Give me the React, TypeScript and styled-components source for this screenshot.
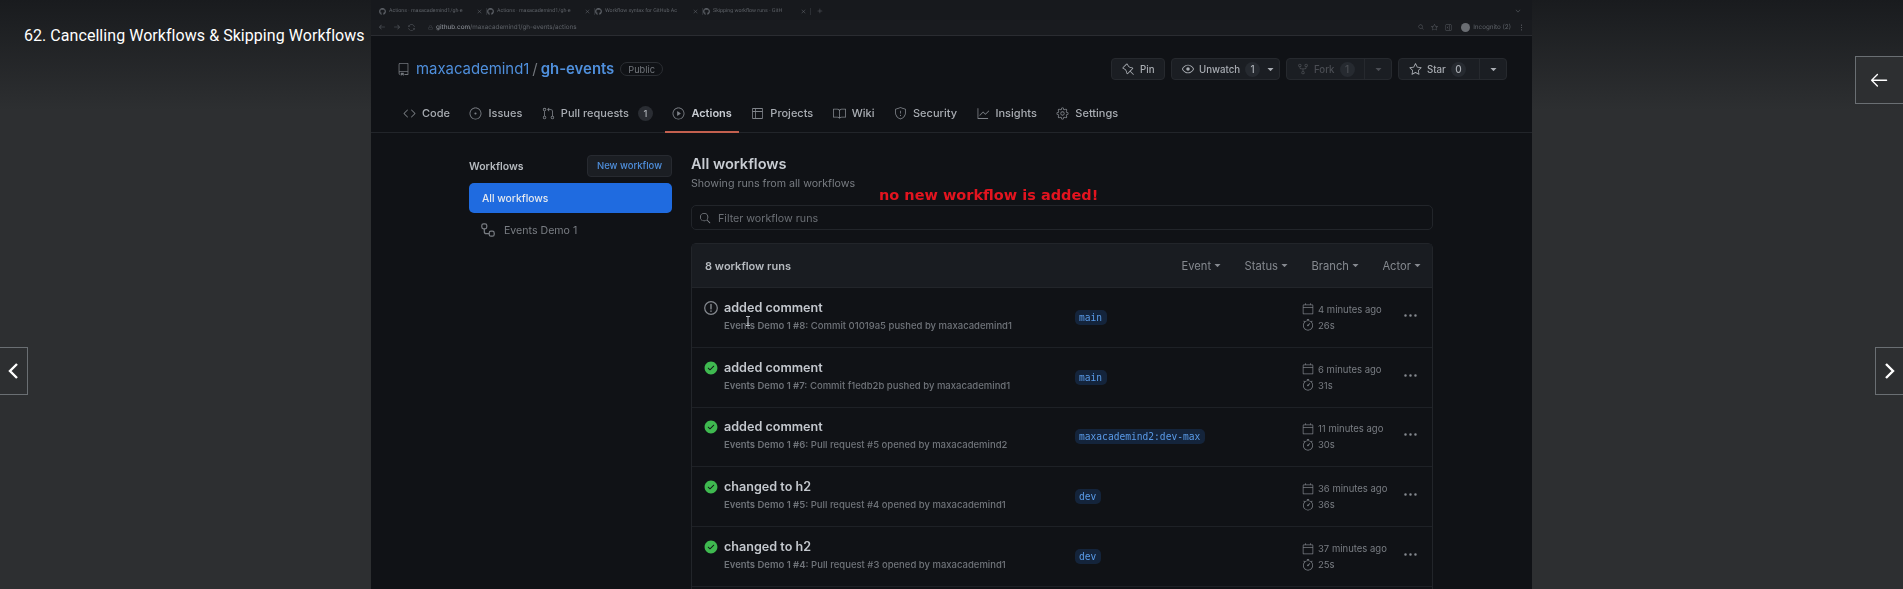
import styled, { createGlobalStyle } from "styled-components";
import { FaGithub } from "react-icons/fa";
import {
  GoArrowLeft,
  GoArrowRight,
  GoBook,
  GoCalendar,
  GoCheckCircleFill,
  GoChevronDown,
  GoCode,
  GoGear,
  GoGitPullRequest,
  GoGraph,
  GoIssueOpened,
  GoKebabHorizontal,
  GoLock,
  GoPin,
  GoPlay,
  GoEye,
  GoRepo,
  GoRepoForked,
  GoSearch,
  GoShield,
  GoStar,
  GoStopwatch,
  GoSync,
  GoTable,
  GoTriangleDown,
  GoX,
  GoPlus,
  GoSidebarExpand,
} from "react-icons/go";

const GlobalStyle = createGlobalStyle`
  html, body {
    margin: 0;
    padding: 0;
    background: #2d2f31;
  }
  * {
    box-sizing: border-box;
  }
`;

const Page = styled.div`
  position: relative;
  height: 100vh;
  overflow: hidden;
  display: flex;
  justify-content: center;
  background: #2d2f31;
  font-family: Inter, "Liberation Sans", sans-serif;
`;

const TopShade = styled.div`
  position: absolute;
  inset: 0 0 auto 0;
  height: 110px;
  background: linear-gradient(to bottom, rgba(24, 26, 29, 0.95), rgba(45, 47, 49, 0));
  pointer-events: none;
`;

const LectureTitle = styled.div`
  position: absolute;
  left: 24px;
  top: 25px;
  font-family: Roboto, sans-serif;
  font-size: 16px;
  letter-spacing: 0.05px;
  line-height: 22px;
  color: #fff;
  white-space: nowrap;
`;

const BackButton = styled.div`
  position: absolute;
  right: -1px;
  top: 56px;
  width: 49px;
  height: 48px;
  border: 1px solid #6a6f73;
  background: #2d2f31;
  color: #fff;
  display: flex;
  align-items: center;
  justify-content: center;
  padding-right: 2px;
`;

const SideArrow = styled.div<{ $side: "left" | "right" }>`
  position: absolute;
  top: 347px;
  ${(p) => p.$side}: -1px;
  width: 29px;
  height: 48px;
  border: 1px solid #6a6f73;
  background: #2d2f31;
  color: #fff;
  display: flex;
  align-items: center;
  justify-content: center;
  padding-right: ${(p) => (p.$side === "left" ? 2 : 0)}px;
`;

const Video = styled.div`
  width: 1161px;
  height: 653px;
  flex: none;
  background: #101216;
  color: #c4c8ce;
  filter: blur(0.5px);
  position: relative;
`;

const TabStrip = styled.div`
  height: 20px;
  padding: 2px 8px 0;
  display: flex;
  align-items: center;
  background: #17191d;
  color: #5d6167;
`;

const BrowserTab = styled.div`
  width: 108px;
  flex: none;
  display: flex;
  align-items: center;
  gap: 3px;
  font-family: Roboto, sans-serif;
  font-size: 5.3px;
  text-rendering: geometricPrecision;
  white-space: nowrap;
  border-right: 1px solid #2b2e33;
  padding-right: 3px;
  span {
    flex: 1;
  }
`;

const NewTab = styled.div`
  margin-left: 5px;
  display: flex;
`;

const TabChevron = styled.div`
  margin-left: auto;
  display: flex;
  padding-right: 2px;
`;

const UrlBar = styled.div`
  height: 16px;
  padding: 0 7px 1px;
  display: flex;
  align-items: center;
  gap: 7px;
  background: #191b1f;
  border-bottom: 1px solid #2a2c31;
  color: #5d6167;
  font-size: 6.3px;
  text-rendering: geometricPrecision;
`;

const UrlText = styled.div`
  margin-left: 6px;
  display: flex;
  align-items: center;
  gap: 3px;
  flex: 1;
  b {
    font-weight: 500;
    color: #858990;
  }
`;

const Avatar = styled.div`
  width: 9px;
  height: 9px;
  border-radius: 50%;
  background: #6a6d72;
  margin-left: 2px;
  margin-right: -4px;
`;

const RepoHeader = styled.div`
  display: flex;
  align-items: center;
  padding: 22px 25px 18px 26px;
`;

const RepoName = styled.div`
  margin-left: 6px;
  display: flex;
  align-items: center;
  gap: 3px;
  font-size: 14.9px;
  color: #4f8fdc;
  strong {
    font-weight: 600;
  }
  i {
    font-style: normal;
    color: #72767c;
  }
`;

const Visibility = styled.span`
  margin-left: 6px;
  padding: 0 7px;
  height: 14px;
  line-height: 13px;
  font-size: 9.2px;
  color: #72767c;
  border: 1px solid #2b2e33;
  border-radius: 7px;
`;

const RepoActions = styled.div`
  margin-left: auto;
  display: flex;
  gap: 6px;
`;

const ActionButton = styled.div<{ $muted?: boolean; $width: number }>`
  width: ${(p) => p.$width}px;
  height: 22px;
  display: flex;
  align-items: center;
  gap: 5px;
  padding-left: 10px;
  font-size: 9.7px;
  font-weight: 500;
  color: ${(p) => (p.$muted ? "#4a4d53" : "#a9adb3")};
  background: #1b1e23;
  border: 1px solid #26292e;
  border-radius: 4px;
`;

const Count = styled.span`
  min-width: 15px;
  height: 15px;
  line-height: 15px;
  text-align: center;
  border-radius: 8px;
  background: #262a30;
  font-size: 10px;
`;

const Caret = styled.span`
  margin-left: auto;
  width: 27px;
  height: 20px;
  display: flex;
  align-items: center;
  justify-content: center;
  border-left: 1px solid #26292e;
`;

const Nav = styled.nav`
  height: 35px;
  padding-left: 25px;
  display: flex;
  gap: 5.5px;
  border-bottom: 1px solid #22252a;
`;

const NavItem = styled.div<{ $active?: boolean }>`
  height: 35px;
  padding: 0 7px 3px;
  display: flex;
  align-items: center;
  gap: 6px;
  font-size: 11px;
  font-weight: ${(p) => (p.$active ? 600 : 500)};
  color: ${(p) => (p.$active ? "#c9cdd3" : "#a9adb3")};
  border-bottom: 2px solid ${(p) => (p.$active ? "#c4604f" : "transparent")};
  svg {
    color: #7f8389;
  }
`;

const NavCount = styled.span`
  margin-left: 3px;
  width: 15px;
  height: 15px;
  line-height: 15px;
  text-align: center;
  border-radius: 8px;
  background: #2a2d33;
  font-size: 9.4px;
`;

const Content = styled.div`
  padding: 22px 0 0 98px;
  display: grid;
  grid-template-columns: 203px 742px;
  column-gap: 19px;
`;

const SideHead = styled.div`
  display: flex;
  align-items: center;
  justify-content: space-between;
  height: 22px;
  margin-bottom: 6px;
  font-size: 10.5px;
  font-weight: 600;
  color: #b6babf;
`;

const NewWorkflow = styled.div`
  width: 85px;
  height: 22px;
  line-height: 20px;
  text-align: center;
  font-size: 9.5px;
  font-weight: 500;
  color: #4f8fdc;
  background: #1b1e23;
  border: 1px solid #272a30;
  border-radius: 4px;
`;

const SideLink = styled.div<{ $active?: boolean }>`
  height: 30px;
  margin-bottom: 2px;
  padding-left: ${(p) => (p.$active ? 13 : 12)}px;
  display: flex;
  align-items: center;
  gap: 9px;
  font-size: ${(p) => (p.$active ? 10.3 : 10.6)}px;
  font-weight: ${(p) => (p.$active ? 500 : 400)};
  color: ${(p) => (p.$active ? "#e4e8ee" : "#797d83")};
  background: ${(p) => (p.$active ? "#1f6be0" : "transparent")};
  border-radius: 5px;
`;

const Main = styled.div`
  position: relative;
`;

const MainTitle = styled.div`
  height: 18px;
  line-height: 18px;
  font-size: 14.6px;
  font-weight: 600;
  color: #c9cdd3;
`;

const MainSub = styled.div`
  margin-top: 2px;
  height: 18px;
  line-height: 18px;
  font-size: 10.65px;
  color: #797d83;
`;

const Annotation = styled.div`
  position: absolute;
  left: 188px;
  top: 31px;
  font-family: "DejaVu Sans", sans-serif;
  font-weight: 700;
  font-size: 14.5px;
  line-height: 18px;
  color: #e3141f;
  white-space: nowrap;
`;

const SearchBox = styled.div`
  margin-top: 12px;
  height: 25px;
  padding: 1px 0 0 7px;
  display: flex;
  align-items: center;
  gap: 7px;
  font-size: 10.7px;
  color: #6b6f75;
  border: 1px solid #22252a;
  border-radius: 5px;
  svg {
    color: #85898f;
  }
`;

const RunsBox = styled.div`
  margin-top: 13px;
  padding-bottom: 40px;
  border: 1px solid #22252a;
  border-radius: 5px 5px 0 0;
`;

const RunsHead = styled.div`
  height: 44px;
  padding: 0 9px 0 13px;
  display: flex;
  align-items: center;
  background: #191c21;
  border-bottom: 1px solid #22252a;
  font-size: 11px;
  font-weight: 600;
  color: #b6babf;
`;

const Filters = styled.div`
  margin-left: auto;
  display: flex;
  gap: 21.5px;
`;

const Filter = styled.div`
  display: flex;
  align-items: center;
  gap: 1px;
  font-weight: 400;
  font-size: 11.2px;
  color: #85898f;
`;

const RunRow = styled.div`
  position: relative;
  height: 59.8px;
  display: grid;
  grid-template-columns: 383px 227px 102px 1fr;
  align-items: center;
  border-bottom: 1px solid #1e2126;
`;

const RunInfo = styled.div`
  padding: 0 0 1px 12px;
  display: flex;
  align-items: flex-start;
  gap: 6px;
`;

const StatusIcon = styled.div<{ $ok?: boolean }>`
  width: 14px;
  height: 14px;
  flex: none;
  display: flex;
  color: ${(p) => (p.$ok ? "#3fb950" : "#85898f")};
`;

const RunText = styled.div`
  display: flex;
  flex-direction: column;
  gap: 2px;
`;

const RunTitle = styled.div`
  height: 15px;
  line-height: 14px;
  font-size: 12.6px;
  font-weight: 600;
  color: #c4c8ce;
`;

const RunMeta = styled.div`
  height: 15px;
  line-height: 15px;
  font-size: 9.5px;
  font-weight: 500;
  color: #6f7379;
  white-space: nowrap;
  b {
    font-weight: 600;
  }
`;

const BranchCell = styled.div`
  display: flex;
`;

const Branch = styled.span`
  height: 15px;
  line-height: 15px;
  padding: 0 5px 0 4px;
  font-family: "DejaVu Sans Mono", monospace;
  font-size: 9.6px;
  color: #5a9be8;
  background: #14243b;
  border-radius: 5px;
`;

const TimeCell = styled.div`
  display: flex;
  flex-direction: column;
  gap: 2px;
  font-size: 9.5px;
  color: #797d83;
`;

const TimeLine = styled.div`
  height: 14px;
  display: flex;
  align-items: center;
  gap: 4px;
  white-space: nowrap;
`;

const More = styled.div`
  display: flex;
  margin: -4px 0 0 -1px;
  color: #85898f;
`;

const TextCursor = styled.svg`
  position: absolute;
  left: 53px;
  top: 28px;
`;

type Run = {
  title: string;
  workflow: string;
  text: string;
  branch: string;
  ago: string;
  took: string;
  ok: boolean;
};

const tabs = [
  "Actions · maxacademind1/gh-e",
  "Actions · maxacademind1/gh-e",
  "Workflow syntax for GitHub Ac",
  "Skipping workflow runs - GitH",
];

const navItems = [
  { label: "Code", Icon: GoCode },
  { label: "Issues", Icon: GoIssueOpened },
  { label: "Pull requests", Icon: GoGitPullRequest, count: 1 },
  { label: "Actions", Icon: GoPlay, active: true },
  { label: "Projects", Icon: GoTable },
  { label: "Wiki", Icon: GoBook },
  { label: "Security", Icon: GoShield },
  { label: "Insights", Icon: GoGraph },
  { label: "Settings", Icon: GoGear },
];

const runs: Run[] = [
  { title: "added comment", workflow: "Events Demo 1 #8:", text: " Commit 01019a5 pushed by maxacademind1", branch: "main", ago: "4 minutes ago", took: "26s", ok: false },
  { title: "added comment", workflow: "Events Demo 1 #7:", text: " Commit f1edb2b pushed by maxacademind1", branch: "main", ago: "6 minutes ago", took: "31s", ok: true },
  { title: "added comment", workflow: "Events Demo 1 #6:", text: " Pull request #5 opened by maxacademind2", branch: "maxacademind2:dev-max", ago: "11 minutes ago", took: "30s", ok: true },
  { title: "changed to h2", workflow: "Events Demo 1 #5:", text: " Pull request #4 opened by maxacademind1", branch: "dev", ago: "36 minutes ago", took: "36s", ok: true },
  { title: "changed to h2", workflow: "Events Demo 1 #4:", text: " Pull request #3 opened by maxacademind1", branch: "dev", ago: "37 minutes ago", took: "25s", ok: true },
];

function CancelledIcon() {
  return (
    <svg width="14" height="14" viewBox="0 0 16 16" fill="none" stroke="currentColor">
      <circle cx="8" cy="8" r="7.2" strokeWidth="1.4" />
      <path d="M8 4v5" strokeWidth="1.6" strokeLinecap="round" />
      <circle cx="8" cy="11.6" r="0.9" fill="currentColor" stroke="none" />
    </svg>
  );
}

// octicon's workflow glyph is too square at this size, the video shows round nodes
function WorkflowIcon() {
  return (
    <svg width="14" height="14" viewBox="0 0 14 14" fill="none" stroke="currentColor" strokeWidth="1.2">
      <rect x="0.8" y="0.8" width="5" height="5" rx="1.8" />
      <rect x="8.2" y="8.2" width="5" height="5" rx="1.8" />
      <path d="M3.3 5.8v2.9c0 1 .6 2 2 2h2.9" />
    </svg>
  );
}

export default function App() {
  return (
    <>
      <GlobalStyle />
      <Page>
        <TopShade />
        <Video>
          <TabStrip>
            {tabs.map((tab, index) => (
              <BrowserTab key={index}>
                <FaGithub size={7} />
                <span>{tab}</span>
                <GoX size={7} />
              </BrowserTab>
            ))}
            <NewTab>
              <GoPlus size={8} />
            </NewTab>
            <TabChevron>
              <GoChevronDown size={8} />
            </TabChevron>
          </TabStrip>
          <UrlBar>
            <GoArrowLeft size={8} />
            <GoArrowRight size={8} />
            <GoSync size={7} />
            <UrlText>
              <GoLock size={5} />
              <span>
                <b>github.com</b>/maxacademind1/gh-events/actions
              </span>
            </UrlText>
            <GoSearch size={6} />
            <GoStar size={7} />
            <GoSidebarExpand size={7} />
            <Avatar />
            <span>Incognito (2)</span>
            <GoKebabHorizontal size={7} style={{ transform: "rotate(90deg)" }} />
          </UrlBar>

          <RepoHeader>
            <GoRepo size={13} color="#72767c" />
            <RepoName>
              maxacademind1 <i>/</i> <strong>gh-events</strong>
            </RepoName>
            <Visibility>Public</Visibility>
            <RepoActions>
              <ActionButton $width={54}>
                <GoPin size={13} /> Pin
              </ActionButton>
              <ActionButton $width={109}>
                <GoEye size={12} /> Unwatch <Count>1</Count>
                <GoTriangleDown size={11} />
              </ActionButton>
              <ActionButton $muted $width={106}>
                <GoRepoForked size={12} /> Fork <Count>1</Count>
                <Caret>
                  <GoTriangleDown size={11} />
                </Caret>
              </ActionButton>
              <ActionButton $width={109}>
                <GoStar size={13} /> Star <Count>0</Count>
                <Caret>
                  <GoTriangleDown size={11} />
                </Caret>
              </ActionButton>
            </RepoActions>
          </RepoHeader>

          <Nav>
            {navItems.map(({ label, Icon, count, active }) => (
              <NavItem key={label} $active={active}>
                <Icon size={13} />
                {label}
                {count ? <NavCount>{count}</NavCount> : null}
              </NavItem>
            ))}
          </Nav>

          <Content>
            <div>
              <SideHead>
                Workflows
                <NewWorkflow>New workflow</NewWorkflow>
              </SideHead>
              <SideLink $active>All workflows</SideLink>
              <SideLink>
                <WorkflowIcon /> Events Demo 1
              </SideLink>
            </div>

            <Main>
              <MainTitle>All workflows</MainTitle>
              <MainSub>Showing runs from all workflows</MainSub>
              <Annotation>no new workflow is added!</Annotation>
              <SearchBox>
                <GoSearch size={12} /> Filter workflow runs
              </SearchBox>
              <RunsBox>
                <RunsHead>
                  8 workflow runs
                  <Filters>
                    {["Event", "Status", "Branch", "Actor"].map((name) => (
                      <Filter key={name}>
                        {name} <GoTriangleDown size={11} />
                      </Filter>
                    ))}
                  </Filters>
                </RunsHead>
                {runs.map((run, index) => (
                  <RunRow key={index}>
                    <RunInfo>
                      <StatusIcon $ok={run.ok}>
                        {run.ok ? <GoCheckCircleFill size={14} /> : <CancelledIcon />}
                      </StatusIcon>
                      <RunText>
                        <RunTitle>{run.title}</RunTitle>
                        <RunMeta>
                          <b>{run.workflow}</b>
                          {run.text}
                        </RunMeta>
                      </RunText>
                    </RunInfo>
                    <BranchCell>
                      <Branch>{run.branch}</Branch>
                    </BranchCell>
                    <TimeCell>
                      <TimeLine>
                        <GoCalendar size={12} /> {run.ago}
                      </TimeLine>
                      <TimeLine>
                        <GoStopwatch size={12} /> {run.took}
                      </TimeLine>
                    </TimeCell>
                    <More>
                      <GoKebabHorizontal size={15} />
                    </More>
                    {index === 0 ? (
                      <TextCursor width="6" height="10" viewBox="0 0 6 10" fill="none" stroke="#b9bdc3">
                        <path d="M1 .5h4M3 .5v9M1 9.5h4" />
                      </TextCursor>
                    ) : null}
                  </RunRow>
                ))}
              </RunsBox>
            </Main>
          </Content>
        </Video>

        <LectureTitle>62. Cancelling Workflows &amp; Skipping Workflows</LectureTitle>
        <BackButton>
          <GoArrowLeft size={22} />
        </BackButton>
        <SideArrow $side="left">
          <svg width="12" height="18" viewBox="0 0 12 18" fill="none" stroke="currentColor" strokeWidth="2.4">
            <path d="M10 2 3 9l7 7" />
          </svg>
        </SideArrow>
        <SideArrow $side="right">
          <svg width="12" height="18" viewBox="0 0 12 18" fill="none" stroke="currentColor" strokeWidth="2.4">
            <path d="M2 2l7 7-7 7" />
          </svg>
        </SideArrow>
      </Page>
    </>
  );
}
